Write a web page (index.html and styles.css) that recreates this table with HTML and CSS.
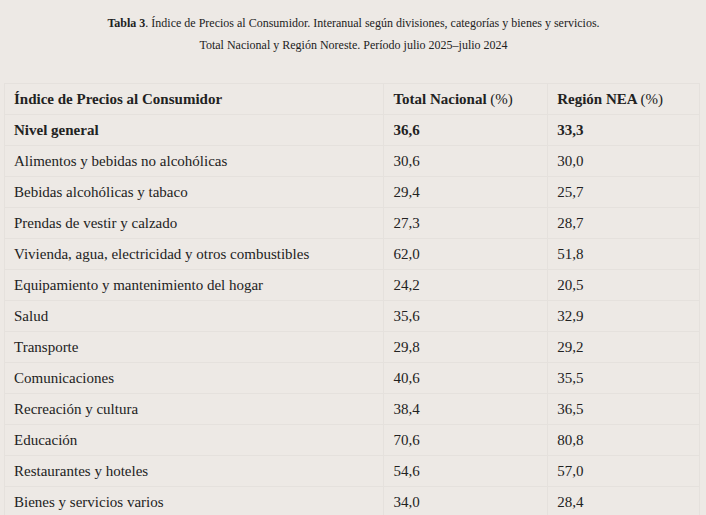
FILE: index.html
```html
<!DOCTYPE html>
<html lang="es">
<head>
<meta charset="utf-8">
<title>Tabla 3</title>
<link rel="stylesheet" href="styles.css">
</head>
<body>
<div class="page">
  <div class="caption">
    <p><strong>Tabla 3</strong>. Índice de Precios al Consumidor. Interanual según divisiones, categorías y bienes y servicios.</p>
    <p>Total Nacional y Región Noreste. Período julio 2025–julio 2024</p>
  </div>
  <table class="data">
    <colgroup>
      <col class="c1"><col class="c2"><col class="c3">
    </colgroup>
    <thead>
      <tr><th>Índice de Precios al Consumidor</th><th>Total Nacional <span class="n">(%)</span></th><th>Región NEA <span class="n">(%)</span></th></tr>
    </thead>
    <tbody>
      <tr class="b"><td>Nivel general</td><td>36,6</td><td>33,3</td></tr>
      <tr><td>Alimentos y bebidas no alcohólicas</td><td>30,6</td><td>30,0</td></tr>
      <tr><td>Bebidas alcohólicas y tabaco</td><td>29,4</td><td>25,7</td></tr>
      <tr><td>Prendas de vestir y calzado</td><td>27,3</td><td>28,7</td></tr>
      <tr><td>Vivienda, agua, electricidad y otros combustibles</td><td>62,0</td><td>51,8</td></tr>
      <tr><td>Equipamiento y mantenimiento del hogar</td><td>24,2</td><td>20,5</td></tr>
      <tr><td>Salud</td><td>35,6</td><td>32,9</td></tr>
      <tr><td>Transporte</td><td>29,8</td><td>29,2</td></tr>
      <tr><td>Comunicaciones</td><td>40,6</td><td>35,5</td></tr>
      <tr><td>Recreación y cultura</td><td>38,4</td><td>36,5</td></tr>
      <tr><td>Educación</td><td>70,6</td><td>80,8</td></tr>
      <tr><td>Restaurantes y hoteles</td><td>54,6</td><td>57,0</td></tr>
      <tr><td>Bienes y servicios varios</td><td>34,0</td><td>28,4</td></tr>
    </tbody>
  </table>
</div>
</body>
</html>
```
FILE: styles.css
```css
html, body {
  margin: 0;
  padding: 0;
  background: #ede9e5;
}
body {
  font-family: "Liberation Serif", "Times New Roman", serif;
  color: #222;
}
.page {
  padding: 12px 7px 0 4px;
}
.caption {
  text-align: center;
  font-size: 12px;
  line-height: 22px;
  padding-left: 4px;
}
.caption p {
  margin: 0;
}
.data {
  margin-top: 27px;
  width: 696px;
  border-collapse: collapse;
  font-size: 15px;
}
.c1 { width: 380px; }
.c2 { width: 164px; }
.c3 { width: 152px; }
.data th,
.data td {
  border: 1px solid #e5e1dd;
  height: 30px;
  padding: 0 9px;
  text-align: left;
  vertical-align: middle;
}
.data th {
  font-weight: bold;
}
.data th .n {
  font-weight: normal;
}
.data tr.b td {
  font-weight: bold;
}
```
